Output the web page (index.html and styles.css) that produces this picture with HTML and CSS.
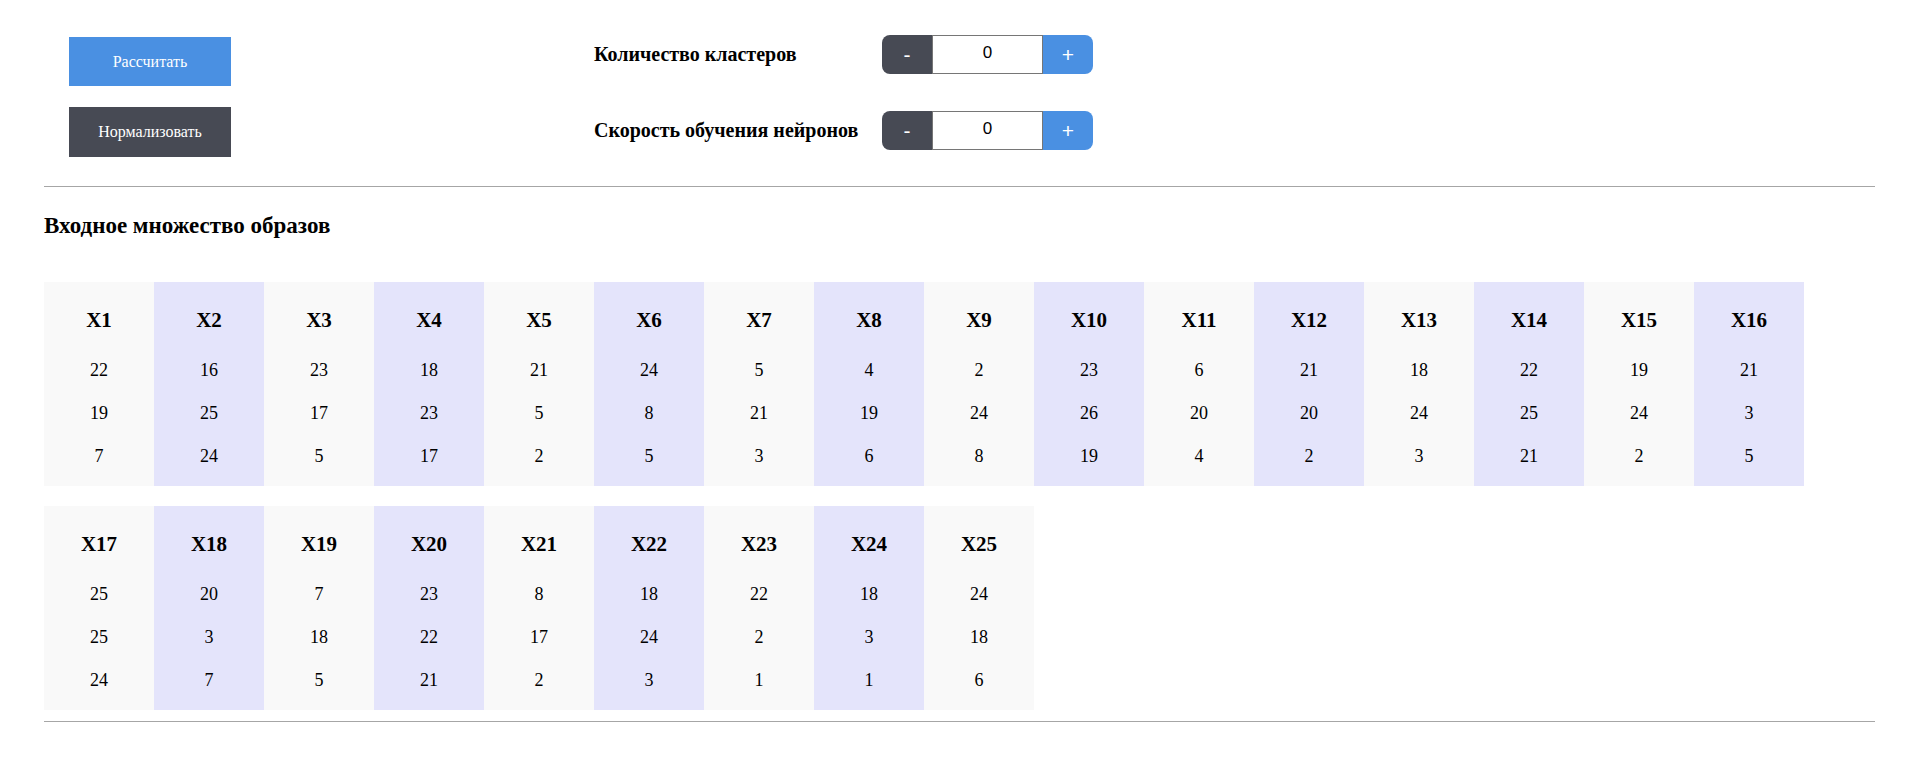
FILE: index.html
```html
<!DOCTYPE html>
<html lang="ru">
<head>
<meta charset="utf-8">
<title>Кластеризация</title>
<link rel="stylesheet" href="styles.css">
</head>
<body>
<div class="page">
  <section class="controls">
    <div class="actions">
      <button class="btn btn-blue">Рассчитать</button>
      <button class="btn btn-dark">Нормализовать</button>
    </div>
    <div class="params">
      <div class="param-label">Количество кластеров</div>
      <div class="stepper">
        <button class="step step-minus">-</button>
        <input class="step-input" type="text" value="0">
        <button class="step step-plus">+</button>
      </div>
      <div class="param-label">Скорость обучения нейронов</div>
      <div class="stepper">
        <button class="step step-minus">-</button>
        <input class="step-input" type="text" value="0">
        <button class="step step-plus">+</button>
      </div>
    </div>
  </section>
  <hr class="divider">
  <h3 class="section-title">Входное множество образов</h3>
  <div class="samples">
    <div class="col"><div class="col-head">X1</div><div class="val">22</div><div class="val">19</div><div class="val">7</div></div>
    <div class="col"><div class="col-head">X2</div><div class="val">16</div><div class="val">25</div><div class="val">24</div></div>
    <div class="col"><div class="col-head">X3</div><div class="val">23</div><div class="val">17</div><div class="val">5</div></div>
    <div class="col"><div class="col-head">X4</div><div class="val">18</div><div class="val">23</div><div class="val">17</div></div>
    <div class="col"><div class="col-head">X5</div><div class="val">21</div><div class="val">5</div><div class="val">2</div></div>
    <div class="col"><div class="col-head">X6</div><div class="val">24</div><div class="val">8</div><div class="val">5</div></div>
    <div class="col"><div class="col-head">X7</div><div class="val">5</div><div class="val">21</div><div class="val">3</div></div>
    <div class="col"><div class="col-head">X8</div><div class="val">4</div><div class="val">19</div><div class="val">6</div></div>
    <div class="col"><div class="col-head">X9</div><div class="val">2</div><div class="val">24</div><div class="val">8</div></div>
    <div class="col"><div class="col-head">X10</div><div class="val">23</div><div class="val">26</div><div class="val">19</div></div>
    <div class="col"><div class="col-head">X11</div><div class="val">6</div><div class="val">20</div><div class="val">4</div></div>
    <div class="col"><div class="col-head">X12</div><div class="val">21</div><div class="val">20</div><div class="val">2</div></div>
    <div class="col"><div class="col-head">X13</div><div class="val">18</div><div class="val">24</div><div class="val">3</div></div>
    <div class="col"><div class="col-head">X14</div><div class="val">22</div><div class="val">25</div><div class="val">21</div></div>
    <div class="col"><div class="col-head">X15</div><div class="val">19</div><div class="val">24</div><div class="val">2</div></div>
    <div class="col"><div class="col-head">X16</div><div class="val">21</div><div class="val">3</div><div class="val">5</div></div>
    <div class="col"><div class="col-head">X17</div><div class="val">25</div><div class="val">25</div><div class="val">24</div></div>
    <div class="col"><div class="col-head">X18</div><div class="val">20</div><div class="val">3</div><div class="val">7</div></div>
    <div class="col"><div class="col-head">X19</div><div class="val">7</div><div class="val">18</div><div class="val">5</div></div>
    <div class="col"><div class="col-head">X20</div><div class="val">23</div><div class="val">22</div><div class="val">21</div></div>
    <div class="col"><div class="col-head">X21</div><div class="val">8</div><div class="val">17</div><div class="val">2</div></div>
    <div class="col"><div class="col-head">X22</div><div class="val">18</div><div class="val">24</div><div class="val">3</div></div>
    <div class="col"><div class="col-head">X23</div><div class="val">22</div><div class="val">2</div><div class="val">1</div></div>
    <div class="col"><div class="col-head">X24</div><div class="val">18</div><div class="val">3</div><div class="val">1</div></div>
    <div class="col"><div class="col-head">X25</div><div class="val">24</div><div class="val">18</div><div class="val">6</div></div>
  </div>
  <hr class="divider divider-bottom">
</div>
</body>
</html>
```

FILE: styles.css
```css
* { box-sizing: border-box; }

body {
  margin: 0;
  background: #ffffff;
  font-family: "Liberation Serif", "Times New Roman", serif;
  color: #000;
}

.page {
  padding: 0 45px 0 44px;
}

.controls {
  display: flex;
  align-items: flex-start;
  padding-top: 35px;
}

.actions {
  display: flex;
  flex-direction: column;
  gap: 21px;
  margin: 2px 0 0 25px;
  width: 162px;
}

.btn {
  height: 49px;
  border: none;
  color: #ffffff;
  font-family: "Liberation Serif", "Times New Roman", serif;
  font-size: 16px;
  padding: 0;
}

.btn-blue { background: #4a90e2; }
.btn-dark { background: #474a54; height: 50px; }

.params {
  display: grid;
  grid-template-columns: 288px auto;
  row-gap: 37px;
  align-items: center;
  margin-left: 363px;
}

.param-label {
  font-weight: bold;
  font-size: 20px;
}

.stepper {
  display: flex;
  height: 39px;
}

.step {
  width: 50px;
  border: none;
  color: #ffffff;
  font-size: 21px;
  font-family: "Liberation Sans", Arial, sans-serif;
  font-weight: normal;
  padding: 0;
}

.step-minus {
  background: #474a54;
  border-radius: 8px 0 0 8px;
}

.step-plus {
  background: #4a90e2;
  border-radius: 0 8px 8px 0;
}

.step-input {
  width: 111px;
  height: 39px;
  border: 1px solid #767676;
  text-align: center;
  font-family: "Liberation Sans", Arial, sans-serif;
  font-size: 17px;
  color: #000;
  padding: 0 0 3px;
  outline: none;
}

.divider {
  border: none;
  border-top: 1px solid #a6a6a6;
  height: 0;
  margin: 29px 0 0;
}

.section-title {
  font-size: 23px;
  font-weight: bold;
  margin: 26px 0 0;
  line-height: 26px;
}

.samples {
  display: grid;
  grid-template-columns: repeat(16, 110px);
  row-gap: 20px;
  margin-top: 43px;
}

.col {
  background: #f9f9f9;
  text-align: center;
  padding: 16px 0 8px;
}

.col:nth-child(even) {
  background: #e4e4fb;
}

.col-head {
  font-weight: bold;
  font-size: 21px;
  line-height: 44px;
  margin-bottom: 7px;
}

.val {
  font-size: 18px;
  line-height: 43px;
}

.divider-bottom {
  margin-top: 11px;
}
```
